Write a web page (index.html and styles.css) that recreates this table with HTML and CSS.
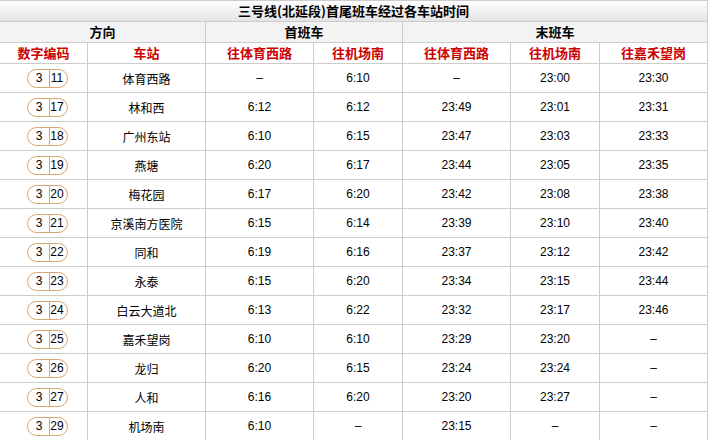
FILE: index.html
```html
<!DOCTYPE html>
<html>
<head>
<meta charset="utf-8">
<link rel="stylesheet" href="styles.css">
</head>
<body>
<table class="tt">
<colgroup>
<col class="c0"><col class="c1"><col class="c2"><col class="c3"><col class="c4"><col class="c5"><col class="c6">
</colgroup>
<tr class="r-title"><td colspan="7" class="title">三号线(北延段)首尾班车经过各车站时间</td></tr>
<tr class="r-h1"><td colspan="2" class="h1">方向</td><td colspan="2" class="h1">首班车</td><td colspan="3" class="h1">末班车</td></tr>
<tr class="r-h2"><td class="h2">数字编码</td><td class="h2">车站</td><td class="h2">往体育西路</td><td class="h2">往机场南</td><td class="h2">往体育西路</td><td class="h2">往机场南</td><td class="h2">往嘉禾望岗</td></tr>
<tr class="row"><td class="code"><span class="badge"><span class="b-l">3</span><span class="b-r">11</span></span></td><td class="st">体育西路</td><td>–</td><td>6:10</td><td>–</td><td>23:00</td><td>23:30</td></tr>
<tr class="row"><td class="code"><span class="badge"><span class="b-l">3</span><span class="b-r">17</span></span></td><td class="st">林和西</td><td>6:12</td><td>6:12</td><td>23:49</td><td>23:01</td><td>23:31</td></tr>
<tr class="row"><td class="code"><span class="badge"><span class="b-l">3</span><span class="b-r">18</span></span></td><td class="st">广州东站</td><td>6:10</td><td>6:15</td><td>23:47</td><td>23:03</td><td>23:33</td></tr>
<tr class="row"><td class="code"><span class="badge"><span class="b-l">3</span><span class="b-r">19</span></span></td><td class="st">燕塘</td><td>6:20</td><td>6:17</td><td>23:44</td><td>23:05</td><td>23:35</td></tr>
<tr class="row"><td class="code"><span class="badge"><span class="b-l">3</span><span class="b-r">20</span></span></td><td class="st">梅花园</td><td>6:17</td><td>6:20</td><td>23:42</td><td>23:08</td><td>23:38</td></tr>
<tr class="row"><td class="code"><span class="badge"><span class="b-l">3</span><span class="b-r">21</span></span></td><td class="st">京溪南方医院</td><td>6:15</td><td>6:14</td><td>23:39</td><td>23:10</td><td>23:40</td></tr>
<tr class="row"><td class="code"><span class="badge"><span class="b-l">3</span><span class="b-r">22</span></span></td><td class="st">同和</td><td>6:19</td><td>6:16</td><td>23:37</td><td>23:12</td><td>23:42</td></tr>
<tr class="row"><td class="code"><span class="badge"><span class="b-l">3</span><span class="b-r">23</span></span></td><td class="st">永泰</td><td>6:15</td><td>6:20</td><td>23:34</td><td>23:15</td><td>23:44</td></tr>
<tr class="row"><td class="code"><span class="badge"><span class="b-l">3</span><span class="b-r">24</span></span></td><td class="st">白云大道北</td><td>6:13</td><td>6:22</td><td>23:32</td><td>23:17</td><td>23:46</td></tr>
<tr class="row"><td class="code"><span class="badge"><span class="b-l">3</span><span class="b-r">25</span></span></td><td class="st">嘉禾望岗</td><td>6:10</td><td>6:10</td><td>23:29</td><td>23:20</td><td>–</td></tr>
<tr class="row"><td class="code"><span class="badge"><span class="b-l">3</span><span class="b-r">26</span></span></td><td class="st">龙归</td><td>6:20</td><td>6:15</td><td>23:24</td><td>23:24</td><td>–</td></tr>
<tr class="row"><td class="code"><span class="badge"><span class="b-l">3</span><span class="b-r">27</span></span></td><td class="st">人和</td><td>6:16</td><td>6:20</td><td>23:20</td><td>23:27</td><td>–</td></tr>
<tr class="row"><td class="code"><span class="badge"><span class="b-l">3</span><span class="b-r">29</span></span></td><td class="st">机场南</td><td>6:10</td><td>–</td><td>23:15</td><td>–</td><td>–</td></tr>
</table>
</body>
</html>
```
FILE: styles.css
```css
html, body {
  margin: 0;
  padding: 0;
  background: #fff;
}
body {
  font-family: "Liberation Sans", "Noto Sans CJK SC", sans-serif;
  font-size: 12px;
  color: #000;
}
.tt {
  table-layout: fixed;
  width: 708px;
  border-collapse: separate;
  border-spacing: 0;
}
.c0 { width: 88px; }
.c1 { width: 118px; }
.c2 { width: 108px; }
.c3 { width: 89px; }
.c4 { width: 108px; }
.c5 { width: 89px; }
.c6 { width: 108px; }
.tt td {
  box-sizing: border-box;
  border-right: 1px solid #cccccc;
  border-bottom: 1px solid #cccccc;
  padding: 0;
  text-align: center;
  vertical-align: middle;
  white-space: nowrap;
  overflow: hidden;
}
.r-title { height: 22px; }
.r-h1 { height: 21px; }
.r-h2 { height: 21px; }
.row { height: 29px; }
.title {
  border-top: 1px solid #cccccc;
  background: linear-gradient(#ffffff, #e4e4e4);
  font-family: "Noto Sans CJK SC", sans-serif;
  font-weight: bold;
  font-size: 13px;
  line-height: 20px;
}
.h1 {
  background: #f3f3f3;
  font-family: "Noto Sans CJK SC", sans-serif;
  font-weight: bold;
  font-size: 13px;
  line-height: 20px;
}
.h2 {
  color: #cc0000;
  font-family: "Noto Sans CJK SC", sans-serif;
  font-weight: bold;
  font-size: 13px;
  line-height: 20px;
}
.st {
  font-family: "Noto Sans CJK SC", sans-serif;
  font-size: 12px;
}
.code {
  padding-left: 7px !important;
}
.badge {
  display: inline-flex;
  box-sizing: border-box;
  width: 41px;
  height: 19px;
  border: 1.5px solid #d9a672;
  border-radius: 10px;
  vertical-align: middle;
  overflow: hidden;
}
.b-l, .b-r {
  display: flex;
  align-items: center;
  justify-content: center;
  font-size: 12px;
  line-height: 16px;
}
.b-l {
  width: 19px;
  border-right: 1.5px solid #d9a672;
  padding-left: 2px;
}
.b-r {
  flex: 1;
  padding-right: 2px;
}
```
